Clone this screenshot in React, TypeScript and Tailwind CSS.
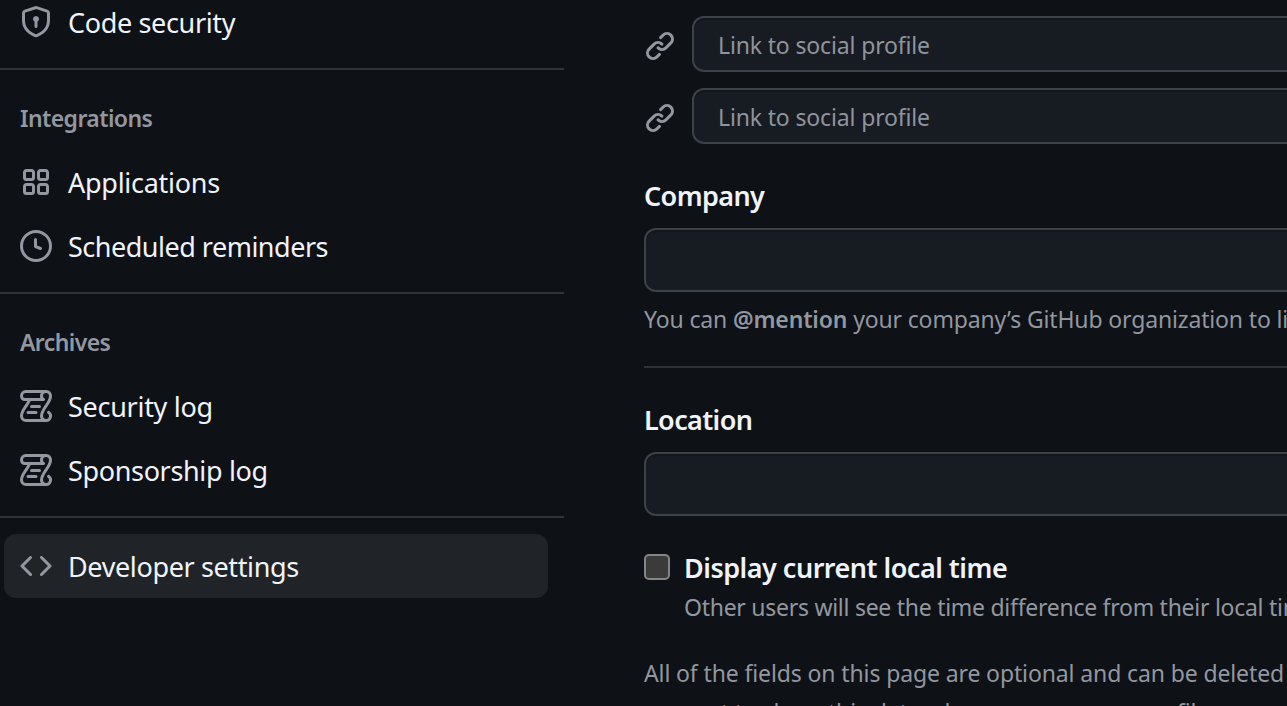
const ICONS = {
  shieldLock:
    "m8.533.133 5.25 1.68A1.75 1.75 0 0 1 15 3.48V7c0 1.566-.32 3.182-1.303 4.682-.983 1.498-2.585 2.813-5.032 3.855a1.697 1.697 0 0 1-1.33 0c-2.447-1.042-4.049-2.357-5.032-3.855C1.32 10.182 1 8.566 1 7V3.48a1.75 1.75 0 0 1 1.217-1.667l5.25-1.68a1.748 1.748 0 0 1 1.066 0Zm-.61 1.429.001.001-5.25 1.68a.251.251 0 0 0-.174.237V7c0 1.36.275 2.666 1.057 3.859.784 1.194 2.121 2.342 4.366 3.298a.196.196 0 0 0 .154 0c2.245-.957 3.582-2.103 4.366-3.297C13.225 9.666 13.5 8.358 13.5 7V3.48a.25.25 0 0 0-.174-.238l-5.25-1.68a.25.25 0 0 0-.153 0ZM9.5 6.5c0 .536-.286 1.032-.75 1.3v2.45a.75.75 0 0 1-1.5 0V7.8A1.5 1.5 0 1 1 9.5 6.5Z",
  apps: "M1.5 3.25c0-.966.784-1.75 1.75-1.75h2.5c.966 0 1.75.784 1.75 1.75v2.5A1.75 1.75 0 0 1 5.75 7.5h-2.5A1.75 1.75 0 0 1 1.5 5.75Zm7 0c0-.966.784-1.75 1.75-1.75h2.5c.966 0 1.75.784 1.75 1.75v2.5a1.75 1.75 0 0 1-1.75 1.75h-2.5A1.75 1.75 0 0 1 8.5 5.75Zm-7 7c0-.966.784-1.75 1.75-1.75h2.5c.966 0 1.75.784 1.75 1.75v2.5a1.75 1.75 0 0 1-1.75 1.75h-2.5a1.75 1.75 0 0 1-1.75-1.75Zm7 0c0-.966.784-1.75 1.75-1.75h2.5c.966 0 1.75.784 1.75 1.75v2.5a1.75 1.75 0 0 1-1.75 1.75h-2.5a1.75 1.75 0 0 1-1.75-1.75ZM3.25 3a.25.25 0 0 0-.25.25v2.5c0 .138.112.25.25.25h2.5A.25.25 0 0 0 6 5.75v-2.5A.25.25 0 0 0 5.75 3Zm7 0a.25.25 0 0 0-.25.25v2.5c0 .138.112.25.25.25h2.5a.25.25 0 0 0 .25-.25v-2.5a.25.25 0 0 0-.25-.25Zm-7 7a.25.25 0 0 0-.25.25v2.5c0 .138.112.25.25.25h2.5a.25.25 0 0 0 .25-.25v-2.5a.25.25 0 0 0-.25-.25Zm7 0a.25.25 0 0 0-.25.25v2.5c0 .138.112.25.25.25h2.5a.25.25 0 0 0 .25-.25v-2.5a.25.25 0 0 0-.25-.25Z",
  clock:
    "M8 0a8 8 0 1 1 0 16A8 8 0 0 1 8 0ZM1.5 8a6.5 6.5 0 1 0 13 0 6.5 6.5 0 0 0-13 0Zm7-3.25v2.992l2.028.812a.75.75 0 0 1-.557 1.392l-2.5-1A.751.751 0 0 1 7 8.25v-3.5a.75.75 0 0 1 1.5 0Z",
  log: "M5 8.25a.75.75 0 0 1 .75-.75h4a.75.75 0 0 1 0 1.5h-4A.75.75 0 0 1 5 8.25ZM4 10.5A.75.75 0 0 0 4 12h4a.75.75 0 0 0 0-1.5H4ZM13-.005c1.654 0 3 1.328 3 3 0 .982-.338 1.933-.783 2.818-.443.879-1.028 1.758-1.582 2.588l-.011.017c-.568.853-1.104 1.659-1.501 2.446-.398.789-.623 1.494-.623 2.136a1.5 1.5 0 1 0 2.333-1.248.75.75 0 0 1 .834-1.246A3 3 0 0 1 13 16H3a3 3 0 0 1-3-3c0-1.582.891-3.135 1.777-4.506.209-.322.418-.637.623-.946.473-.709.923-1.386 1.287-2.048H2.51c-.576 0-1.381-.133-1.907-.783A2.68 2.68 0 0 1 0 2.995a3 3 0 0 1 3-3Zm0 1.5a1.5 1.5 0 0 0-1.5 1.5c0 .476.223.834.667 1.132A.75.75 0 0 1 11.75 5.5H5.368c-.467 1.003-1.141 2.015-1.773 2.963-.192.289-.381.571-.558.845C2.13 10.711 1.5 11.916 1.5 13A1.5 1.5 0 0 0 3 14.5h7.401A2.989 2.989 0 0 1 10 13c0-.979.338-1.928.784-2.812.441-.874 1.023-1.748 1.575-2.576l.017-.026c.568-.853 1.103-1.658 1.501-2.448.398-.79.623-1.497.623-2.143 0-.838-.669-1.5-1.5-1.5Zm-10 0a1.5 1.5 0 0 0-1.5 1.5c0 .321.1.569.27.778.097.12.325.227.74.227h7.674A2.737 2.737 0 0 1 10 2.995c0-.546.146-1.059.401-1.5Z",
  code: "m11.28 3.22 4.25 4.25a.75.75 0 0 1 0 1.06l-4.25 4.25a.749.749 0 0 1-1.275-.326.749.749 0 0 1 .215-.734L13.94 8l-3.72-3.72a.749.749 0 0 1 .326-1.275.749.749 0 0 1 .734.215Zm-6.56 0a.751.751 0 0 1 1.042.018.751.751 0 0 1 .018 1.042L2.06 8l3.72 3.72a.749.749 0 0 1-.326 1.275.749.749 0 0 1-.734-.215L.47 8.53a.75.75 0 0 1 0-1.06Z",
  link: "m7.775 3.275 1.25-1.25a3.5 3.5 0 1 1 4.95 4.95l-2.5 2.5a3.5 3.5 0 0 1-4.95 0 .751.751 0 0 1 .018-1.042.751.751 0 0 1 1.042-.018 1.998 1.998 0 0 0 2.83 0l2.5-2.5a2.002 2.002 0 0 0-2.83-2.83l-1.25 1.25a.751.751 0 0 1-1.042-.018.751.751 0 0 1-.018-1.042Zm-4.69 9.64a1.998 1.998 0 0 0 2.83 0l1.25-1.25a.751.751 0 0 1 1.042.018.751.751 0 0 1 .018 1.042l-1.25 1.25a3.5 3.5 0 1 1-4.95-4.95l2.5-2.5a3.5 3.5 0 0 1 4.95 0 .751.751 0 0 1-.018 1.042.751.751 0 0 1-1.042.018 1.998 1.998 0 0 0-2.83 0l-2.5 2.5a1.998 1.998 0 0 0 0 2.83Z",
};

function Icon({ name, className = "" }: { name: keyof typeof ICONS; className?: string }) {
  return (
    <svg viewBox="0 0 16 16" fill="currentColor" className={`size-8 shrink-0 text-[#9297a0] ${className}`}>
      <path d={ICONS[name]} />
    </svg>
  );
}

type NavItemProps = { icon: keyof typeof ICONS; label: string; tracking: string; active?: boolean };

function NavItem({ icon, label, tracking, active = false }: NavItemProps) {
  return (
    <a className={`ml-1 flex h-16 w-[544px] shrink-0 items-center gap-4 rounded-xl pl-4 ${active ? "bg-[#202428]" : ""}`}>
      <Icon name={icon} />
      <span className={`pt-0.5 text-[27px] leading-10 text-[#f0f4fa] ${tracking}`}>{label}</span>
    </a>
  );
}

function NavDivider() {
  return <div className="mt-3.5 h-0.5 w-[564px] shrink-0 bg-[#2f3338]" />;
}

function NavHeading({ children }: { children: string }) {
  return (
    <h3 className="flex h-20 shrink-0 items-center pt-4 pl-5 text-[23px] font-semibold tracking-[-0.6px] text-[#9297a0]">
      {children}
    </h3>
  );
}

function SocialRow() {
  return (
    <div className="flex h-14 w-[880px] shrink-0 items-center gap-4">
      <Icon name="link" className="mt-1" />
      <div className="flex h-14 flex-1 items-center rounded-xl border-2 border-[#3d4249] bg-[#171b22] pt-0.5 pl-6 text-[23px] tracking-[-0.15px] text-[#8f949d] shadow-[inset_0_2px_0_#12161b]">
        <span>Link to social profile</span>
      </div>
    </div>
  );
}

function FieldLabel({ children }: { children: string }) {
  return (
    <h2 className="mt-[31px] h-[53px] shrink-0 text-[27px] leading-[42px] font-semibold tracking-[-0.62px] text-[#f0f4fa]">
      {children}
    </h2>
  );
}

function FieldBox() {
  return <div className="h-16 w-[880px] shrink-0 rounded-xl border-2 border-[#3d4249] bg-[#171b22] shadow-[inset_0_2px_0_#12161b]" />;
}

export default function App() {
  return (
    <div className="flex h-[706px] w-[1287px] overflow-hidden bg-[#0e1116] font-['Noto_Sans',sans-serif] whitespace-nowrap">
      <nav className="-mt-2.5 flex w-[564px] shrink-0 flex-col">
        <NavItem icon="shieldLock" label="Code security" tracking="tracking-[-0.35px]" />
        <NavDivider />
        <NavHeading>Integrations</NavHeading>
        <NavItem icon="apps" label="Applications" tracking="tracking-[-0.27px]" />
        <NavItem icon="clock" label="Scheduled reminders" tracking="tracking-[-0.5px]" />
        <NavDivider />
        <NavHeading>Archives</NavHeading>
        <NavItem icon="log" label="Security log" tracking="tracking-[-0.28px]" />
        <NavItem icon="log" label="Sponsorship log" tracking="tracking-[-0.35px]" />
        <NavDivider />
        <div className="mt-4">
          <NavItem icon="code" label="Developer settings" tracking="tracking-[-0.37px]" active />
        </div>
      </nav>
      <main className="ml-20 flex w-[643px] shrink-0 flex-col overflow-hidden pt-4 text-[23px] leading-9 text-[#9297a0]">
        <SocialRow />
        <div className="h-4 shrink-0" />
        <SocialRow />
        <FieldLabel>Company</FieldLabel>
        <FieldBox />
        <p className="mt-[9px] h-[37px] shrink-0 tracking-[-0.15px]">
          You can <b className="font-semibold">@mention</b> your company’s GitHub organization to link it.
        </p>
        <div className="mt-7 h-0.5 w-[880px] shrink-0 bg-[#2f3338]" />
        <FieldLabel>Location</FieldLabel>
        <FieldBox />
        <div className="mt-[31px] flex shrink-0 gap-3.5">
          <div className="mt-[7px] size-[26px] shrink-0 rounded-[5px] border-2 border-[#858585] bg-[#3b3b3b]" />
          <div>
            <div className="text-[27px] leading-[42px] font-semibold tracking-[-0.5px] text-[#f0f4fa]">Display current local time</div>
            <div className="tracking-[-0.27px]">Other users will see the time difference from their local time.</div>
          </div>
        </div>
        <div className="mt-[30px] flex shrink-0 flex-col gap-[3px] tracking-[-0.12px]">
          <p>All of the fields on this page are optional and can be deleted at any time, and by filling them out, you're giving us</p>
          <p>consent to share this data wherever your user profile appears.</p>
        </div>
      </main>
    </div>
  );
}
